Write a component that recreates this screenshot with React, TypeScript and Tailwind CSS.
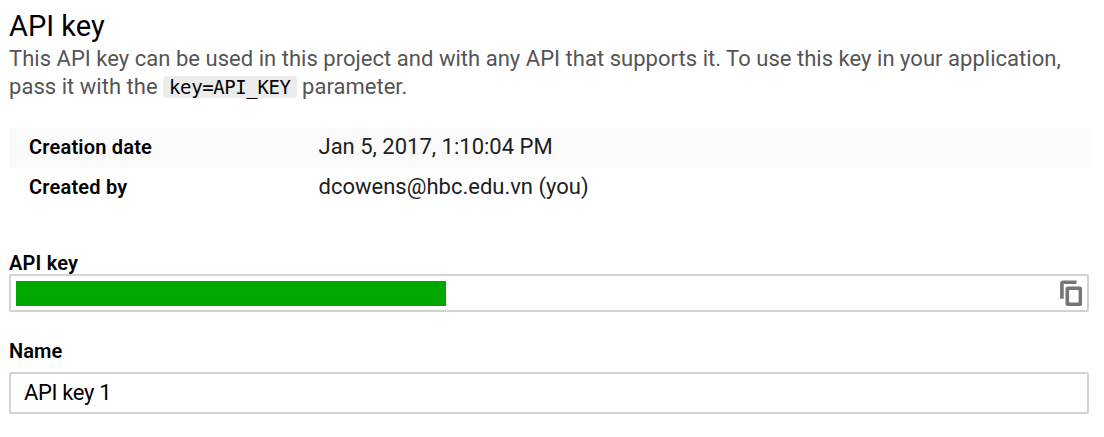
const details = [
  { label: "Creation date", value: "Jan 5, 2017, 1:10:04 PM" },
  { label: "Created by", value: "dcowens@hbc.edu.vn (you)" },
];

function CopyIcon() {
  return (
    <svg viewBox="0 0 22 26" strokeWidth={3.6} className="h-[26px] w-[22px] fill-none stroke-[#757575]">
      <path d="M1.9 18.7V3.8Q1.9 2.3 3.4 2.3H16.5" />
      <rect x="7.3" y="8.3" width="13.1" height="16.1" rx="0.8" />
    </svg>
  );
}

export default function App() {
  return (
    <main className="h-[437px] bg-white pt-2 pr-[15px] pl-[9px] font-[Roboto,sans-serif] text-[22px] text-[#212121]">
      <h1 className="h-[37px] text-[29px] leading-[36px] text-black">API key</h1>
      <p className="h-14 text-[22px] leading-[28px] tracking-[0.028px] whitespace-nowrap text-[#555555]">
        This API key can be used in this project and with any API that supports it. To use this key in your application,
        <br />
        pass it with the{" "}
        <code className="rounded bg-[#ececec] px-[6px] font-['DejaVu_Sans_Mono',monospace] text-[19px] tracking-[-0.4px] text-black">key=API_KEY</code>{" "}
        parameter.
      </p>
      <dl className="mt-[27px]">
        {details.map((d) => (
          <div key={d.label} className="flex h-10 items-center pb-1 pl-5 odd:bg-[#fafafa]">
            <dt className="w-[289.5px] pt-[2px] text-[20px] font-semibold tracking-[0.2px] text-black">{d.label}</dt>
            <dd>{d.value}</dd>
          </div>
        ))}
      </dl>
      <section className="mt-[42px]">
        <h2 className="h-6 text-[20px] leading-[26px] font-semibold tracking-[0.2px] text-black">API key</h2>
        <div className="flex h-[38px] items-center justify-between rounded-[2px] border-2 border-[#d2d2d2] pr-[5px] pl-[5px]">
          <div className="h-[25px] w-[430px] bg-[#00a800]" />
          <CopyIcon />
        </div>
      </section>
      <label className="mt-[26px] block">
        <span className="block h-[34px] text-[20px] leading-[26px] font-semibold tracking-[0.1px] text-black">Name</span>
        <input defaultValue="API key 1" className="block h-[42px] w-full rounded-[2px] border-2 border-[#d2d2d2] px-[13px] pb-[2px] tracking-[-0.35px] text-black outline-none" />
      </label>
    </main>
  );
}
